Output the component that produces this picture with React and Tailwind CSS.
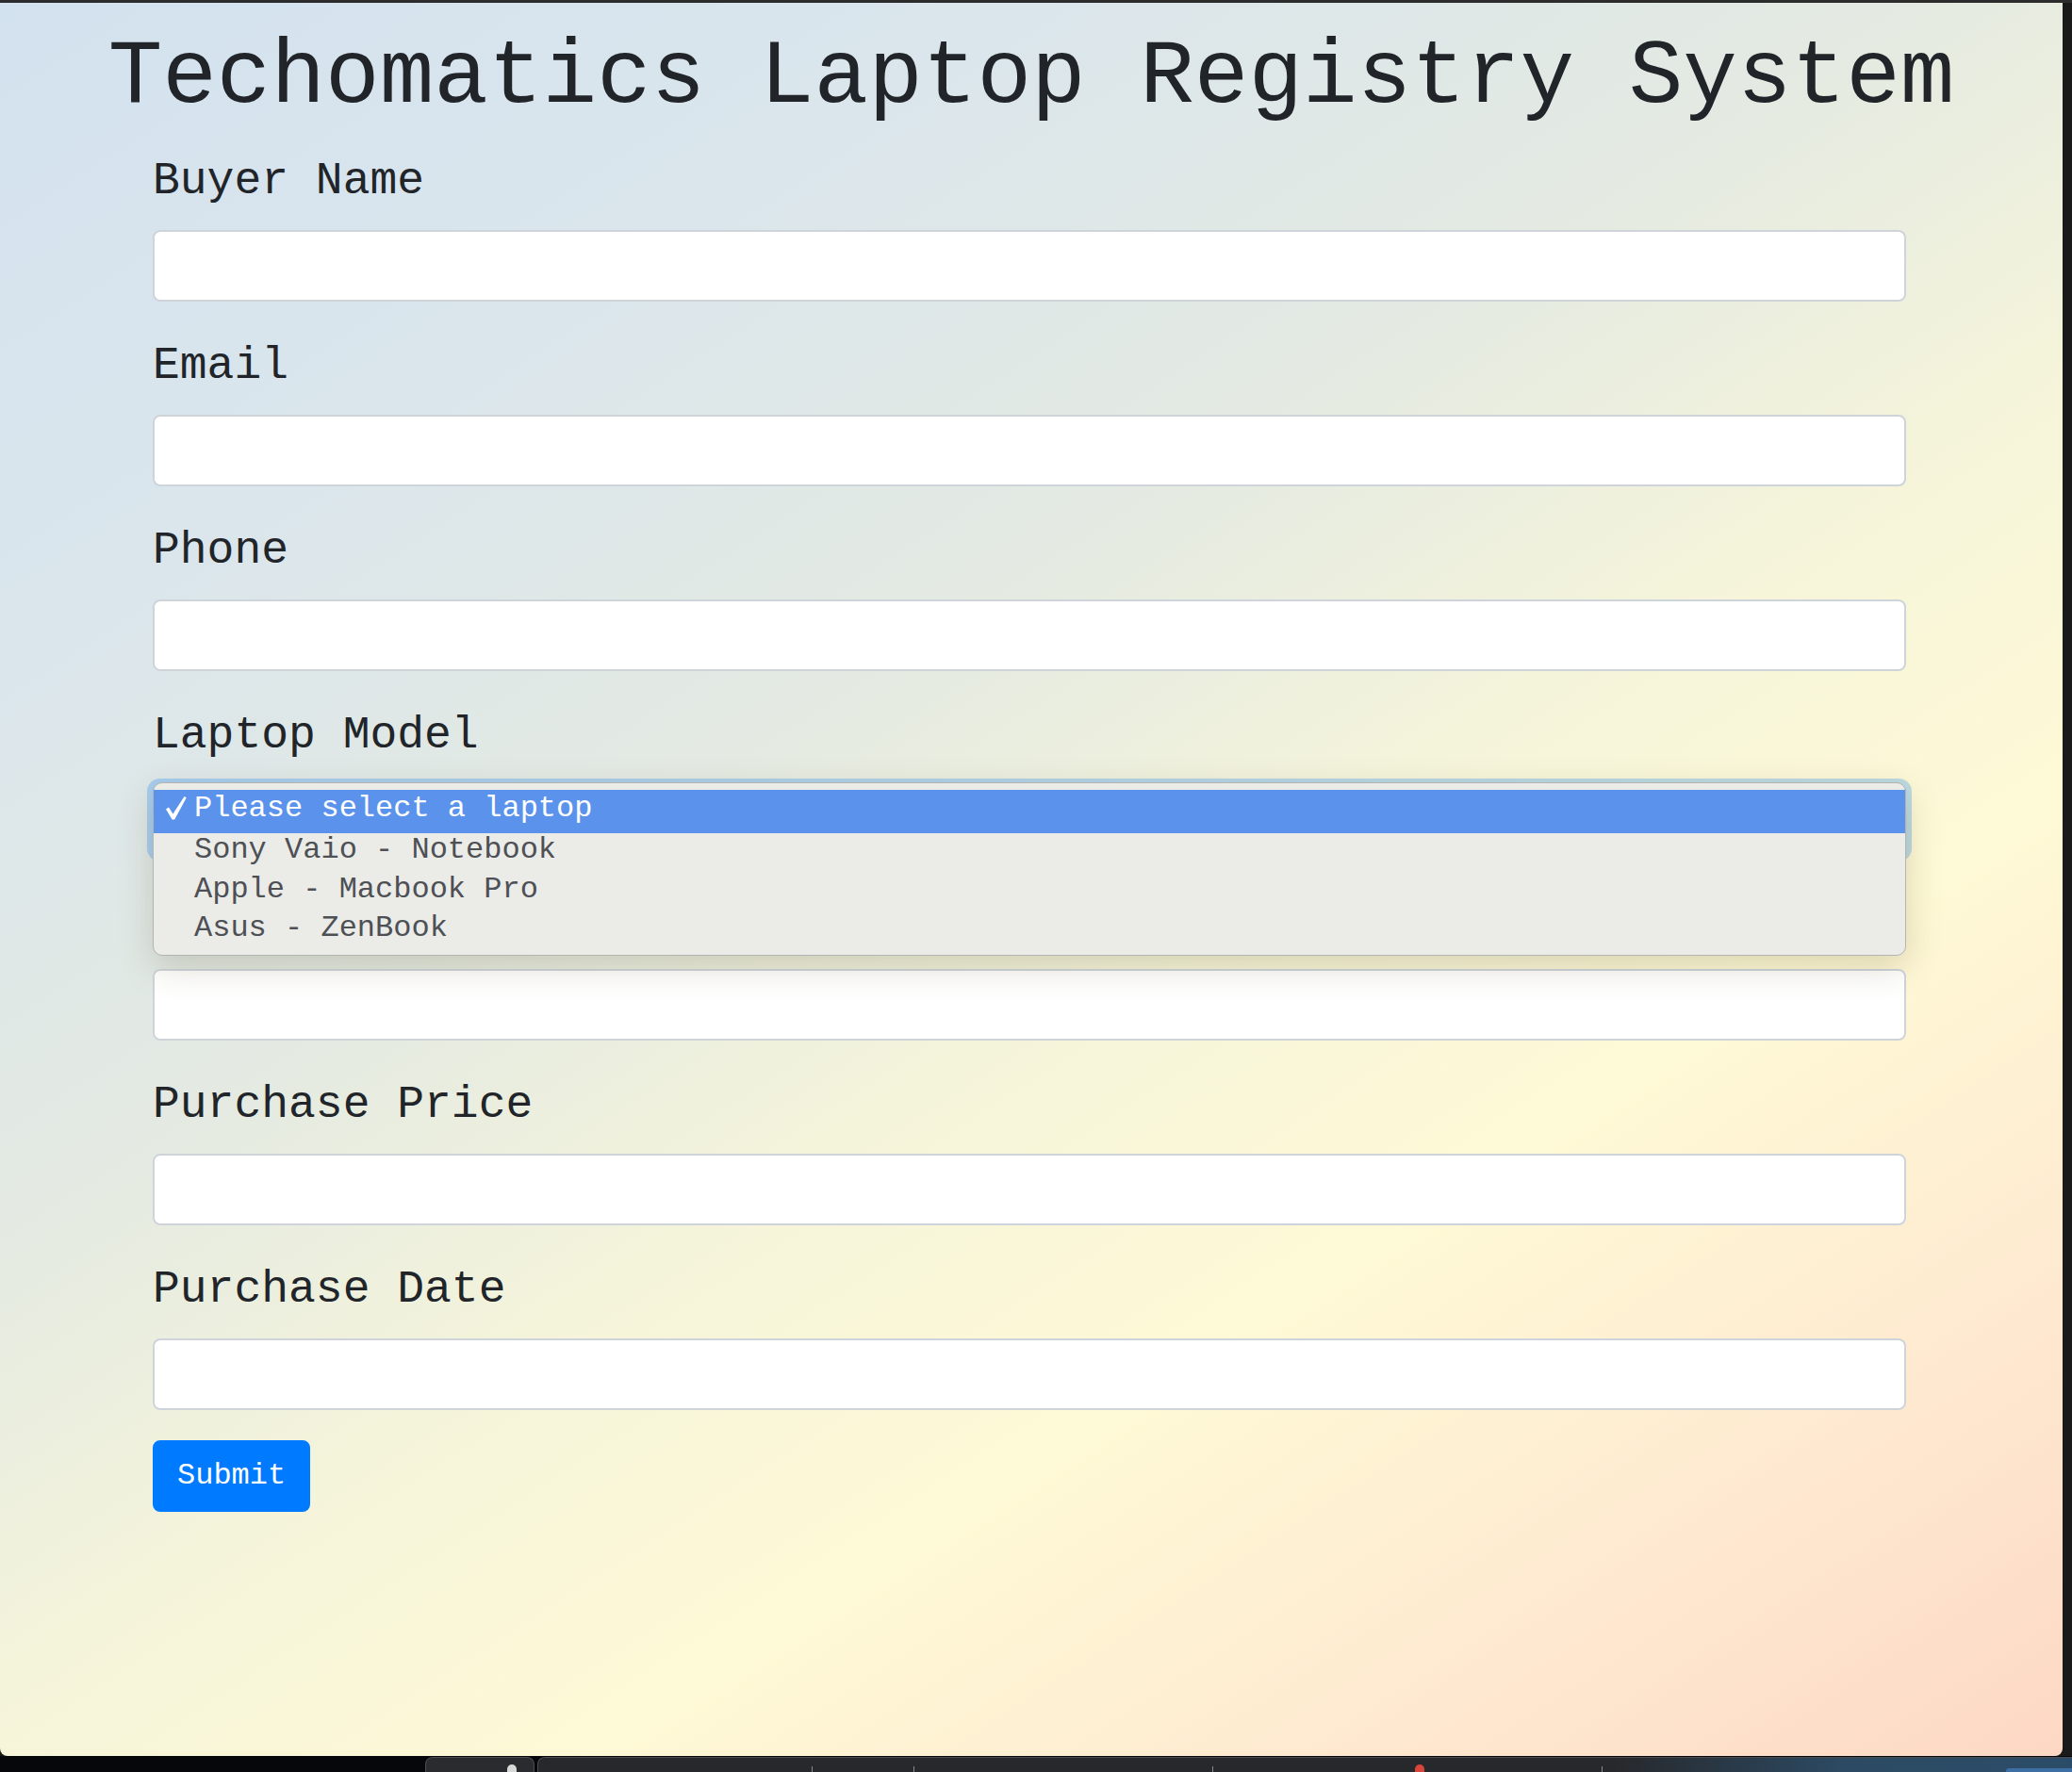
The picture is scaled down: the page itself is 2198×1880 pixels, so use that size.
import React from "react";

const before = ["Buyer Name", "Email", "Phone"];
const after = ["Purchase Price", "Purchase Date"];
const laptops = ["Sony Vaio - Notebook", "Apple - Macbook Pro", "Asus - ZenBook"];

function Field({ label, children }) {
  return (
    <div className="mb-[32px]">
      <label className="mb-[16px] block h-[72px] text-[48px] leading-[72px] text-[#212529]">{label}</label>
      {children}
    </div>
  );
}

function TextInput() {
  return (
    <input
      type="text"
      className="block h-[76px] w-full rounded-[8px] border-2 border-[#ced4da] bg-white px-[24px] text-[32px] outline-none"
    />
  );
}

function Check() {
  return (
    <svg viewBox="0 0 22 25" className="h-[25px] w-[22px] shrink-0" aria-hidden="true">
      <path d="M0 13.5 L3 11.5 L7.5 18.5 L19.5 0 L21.8 1.2 L9.2 24.6 L6.6 24.6 Z" fill="#fff" />
    </svg>
  );
}

// open native dropdown, drawn over the select and the field below it
function LaptopSelect() {
  return (
    <div className="relative h-[76px] w-full rounded-[8px] border-2 border-[#80bdff] bg-white shadow-[0_0_0_6px_rgba(0,123,255,0.25)]">
      <div className="absolute inset-x-[-2px] top-[-4px] z-10 flex h-[184px] flex-col rounded-[10px] border border-[#b4b4b2] bg-[#ebebe8] pt-[7px] text-[32px] shadow-[0_12px_36px_rgba(90,80,40,0.22)]">
        <div className="flex h-[46px] items-start gap-[8px] bg-[#5b93ec] pl-[13px] pt-[2px] leading-[36px] text-white">
          <div className="pt-[5px]">
            <Check />
          </div>
          Please select a laptop
        </div>
        {laptops.map((l) => (
          <div key={l} className="h-[41.5px] pl-[43px] leading-[36px] text-[#4d5055]">
            {l}
          </div>
        ))}
      </div>
    </div>
  );
}

function Tick() {
  return <span className="h-[6px] w-[1px] bg-[#8a8a8a]" />;
}

function Taskbar() {
  return (
    <div className="flex h-[17px] items-end gap-[3px] bg-[#05070b] pl-[451px]">
      <div className="flex h-[16px] w-[116px] items-end justify-end rounded-t-[8px] border-x border-t border-[#4a4c50] bg-[#2a2b2e] pr-[18px]">
        <span className="h-[8px] w-[10px] rounded-t-full bg-[#d8d8d8]" />
      </div>
      <div className="flex h-[16px] flex-1 items-end rounded-tl-[8px] border-l border-t border-[#4a4c50] bg-[linear-gradient(90deg,#27282b_0%,#27282b_70%,#2c4a63_85%,#2b4c68_100%)]">
        <div className="w-[290px]" />
        <Tick />
        <div className="w-[107px]" />
        <Tick />
        <div className="w-[316px]" />
        <Tick />
        <div className="w-[214px]" />
        <span className="h-[8px] w-[10px] rounded-t-full bg-[#d9453a]" />
        <div className="w-[188px]" />
        <Tick />
        <div className="flex-1" />
        <span className="h-[4px] w-[70px] rounded-tl-[3px] bg-[#3d6fa5]" />
      </div>
    </div>
  );
}

export default function App() {
  return (
    <div className="flex h-[1880px] w-[2198px] flex-col bg-[#1a1a1a] font-['Liberation_Mono','Courier_New',monospace]">
      <div className="h-[3px] bg-[#2c2c2c]" />
      <div className="flex h-[1860px]">
        <main className="h-full w-[2188px] overflow-hidden rounded-b-[8px] bg-[linear-gradient(147deg,#d3e2ef_0%,#dbe6ec_22%,#e4eae2_40%,#f6f5da_56%,#fef9d6_69%,#feead0_84%,#fdd8c4_100%)] pt-[22px]">
          <h1 className="mb-[16px] text-center text-[96px] leading-[115px] font-normal text-[#212529]">
            Techomatics Laptop Registry System
          </h1>
          <form className="ml-[162px] w-[1860px]">
            {before.map((l) => (
              <Field key={l} label={l}>
                <TextInput />
              </Field>
            ))}
            <Field label="Laptop Model">
              <LaptopSelect />
            </Field>
            {/* label of this field is hidden under the open dropdown */}
            <Field label="">
              <TextInput />
            </Field>
            {after.map((l) => (
              <Field key={l} label={l}>
                <TextInput />
              </Field>
            ))}
            <button
              type="button"
              className="rounded-[8px] border-2 border-[#007bff] bg-[#007bff] px-[24px] py-[12px] text-[32px] leading-[48px] text-white"
            >
              Submit
            </button>
          </form>
        </main>
        <div className="w-[10px] bg-[#1a1a1a]" />
      </div>
      <Taskbar />
    </div>
  );
}
